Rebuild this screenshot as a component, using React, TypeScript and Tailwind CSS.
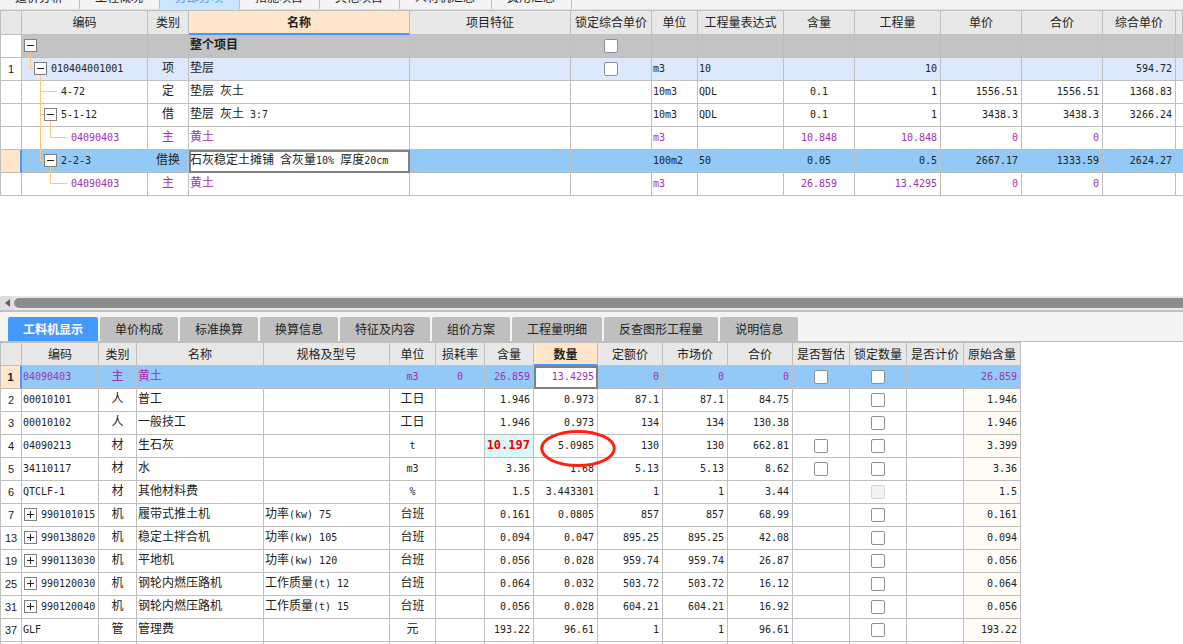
import { useState, type ReactNode } from 'react';
import clsx from 'clsx';

type Align = 'left' | 'center' | 'right';
type CheckState = 'off' | 'disabled' | undefined;

const navTabs = ['造价分析', '工程概况', '分部分项', '措施项目', '其他项目', '人材机汇总', '费用汇总'];

const detailTabs = [
  '工料机显示', '单价构成', '标准换算', '换算信息', '特征及内容',
  '组价方案', '工程量明细', '反查图形工程量', '说明信息'
];

const itemColumns = [
  { label: '', width: 'w-[22px]' },
  { label: '编码', width: 'w-[126px]' },
  { label: '类别', width: 'w-[41px]' },
  { label: '名称', width: 'w-[221px]', active: true },
  { label: '项目特征', width: 'w-[161px]' },
  { label: '锁定综合单价', width: 'w-[81px]' },
  { label: '单位', width: 'w-[46px]' },
  { label: '工程量表达式', width: 'w-[86px]' },
  { label: '含量', width: 'w-[71px]' },
  { label: '工程量', width: 'w-[86px]' },
  { label: '单价', width: 'w-[81px]' },
  { label: '合价', width: 'w-[81px]' },
  { label: '综合单价', width: 'w-[73px]' },
  { label: '', width: '' }
];

const resourceColumns = [
  { label: '', width: 'w-[22px]' },
  { label: '编码', width: 'w-[77px]' },
  { label: '类别', width: 'w-[38px]' },
  { label: '名称', width: 'w-[127px]' },
  { label: '规格及型号', width: 'w-[126px]' },
  { label: '单位', width: 'w-[46px]' },
  { label: '损耗率', width: 'w-[49px]' },
  { label: '含量', width: 'w-[49px]' },
  { label: '数量', width: 'w-[64px]', active: true },
  { label: '定额价', width: 'w-[65px]' },
  { label: '市场价', width: 'w-[65px]' },
  { label: '合价', width: 'w-[65px]' },
  { label: '是否暂估', width: 'w-[57px]' },
  { label: '锁定数量', width: 'w-[57px]' },
  { label: '是否计价', width: 'w-[57px]' },
  { label: '原始含量', width: 'w-[57px]' }
];

// lines: connector path in the code cell, node: indent of the expander box or of the text
const items = [
  { no: '', code: '', kind: '', name: '整个项目', lock: true, unit: '', expr: '', content: '', qty: '', price: '', total: '', unitPrice: '', lines: 'M8.5 17V23', node: 2, box: true, tone: 'root' },
  { no: '1', code: '010404001001', kind: '项', name: '垫层', lock: true, unit: 'm3', expr: '10', content: '', qty: '10', price: '', total: '', unitPrice: '594.72', lines: 'M8.5 0V10.5H12M18.5 17V23', node: 12, box: true, tone: 'section' },
  { no: '', code: '4-72', kind: '定', name: '垫层 灰土', unit: '10m3', expr: 'QDL', content: '0.1', qty: '1', price: '1556.51', total: '1556.51', unitPrice: '1368.83', lines: 'M18.5 0V23M18.5 10.5H35', node: 35, box: false, tone: 'plain' },
  { no: '', code: '5-1-12', kind: '借', name: '垫层 灰土 3:7', unit: '10m3', expr: 'QDL', content: '0.1', qty: '1', price: '3438.3', total: '3438.3', unitPrice: '3266.24', lines: 'M18.5 0V23M18.5 10.5H22M28.5 17V23', node: 22, box: true, tone: 'plain' },
  { no: '', code: '04090403', kind: '主', name: '黄土', unit: 'm3', expr: '', content: '10.848', qty: '10.848', price: '0', total: '0', unitPrice: '', lines: 'M18.5 0V23M28.5 0V10.5H45', node: 45, box: false, tone: 'main' },
  { no: '', code: '2-2-3', kind: '借换', name: '石灰稳定土摊铺 含灰量10% 厚度20cm', unit: '100m2', expr: '50', content: '0.05', qty: '0.5', price: '2667.17', total: '1333.59', unitPrice: '2624.27', lines: 'M18.5 0V10.5H22M28.5 17V23', node: 22, box: true, tone: 'selected' },
  { no: '', code: '04090403', kind: '主', name: '黄土', unit: 'm3', expr: '', content: '26.859', qty: '13.4295', price: '0', total: '0', unitPrice: '', lines: 'M28.5 0V10.5H45', node: 45, box: false, tone: 'main' }
];

interface Resource {
  no: string;
  code: string;
  kind: string;
  name: string;
  spec?: string;
  unit: string;
  loss?: string;
  content: string;
  qty: string;
  base: string;
  market: string;
  total: string;
  estimate?: CheckState;
  lock?: CheckState;
  origin: string;
  group?: boolean;
}

const resources: Resource[] = [
  { no: '1', code: '04090403', kind: '主', name: '黄土', unit: 'm3', loss: '0', content: '26.859', qty: '13.4295', base: '0', market: '0', total: '0', estimate: 'off', lock: 'off', origin: '26.859' },
  { no: '2', code: '00010101', kind: '人', name: '普工', unit: '工日', content: '1.946', qty: '0.973', base: '87.1', market: '87.1', total: '84.75', lock: 'off', origin: '1.946' },
  { no: '3', code: '00010102', kind: '人', name: '一般技工', unit: '工日', content: '1.946', qty: '0.973', base: '134', market: '134', total: '130.38', lock: 'off', origin: '1.946' },
  { no: '4', code: '04090213', kind: '材', name: '生石灰', unit: 't', content: '10.197', qty: '5.0985', base: '130', market: '130', total: '662.81', estimate: 'off', lock: 'off', origin: '3.399' },
  { no: '5', code: '34110117', kind: '材', name: '水', unit: 'm3', content: '3.36', qty: '1.68', base: '5.13', market: '5.13', total: '8.62', estimate: 'off', lock: 'off', origin: '3.36' },
  { no: '6', code: 'QTCLF-1', kind: '材', name: '其他材料费', unit: '%', content: '1.5', qty: '3.443301', base: '1', market: '1', total: '3.44', lock: 'disabled', origin: '1.5' },
  { no: '7', code: '990101015', kind: '机', name: '履带式推土机', spec: '功率(kw) 75', unit: '台班', content: '0.161', qty: '0.0805', base: '857', market: '857', total: '68.99', lock: 'off', origin: '0.161', group: true },
  { no: '13', code: '990138020', kind: '机', name: '稳定土拌合机', spec: '功率(kw) 105', unit: '台班', content: '0.094', qty: '0.047', base: '895.25', market: '895.25', total: '42.08', lock: 'off', origin: '0.094', group: true },
  { no: '19', code: '990113030', kind: '机', name: '平地机', spec: '功率(kw) 120', unit: '台班', content: '0.056', qty: '0.028', base: '959.74', market: '959.74', total: '26.87', lock: 'off', origin: '0.056', group: true },
  { no: '25', code: '990120030', kind: '机', name: '钢轮内燃压路机', spec: '工作质量(t) 12', unit: '台班', content: '0.064', qty: '0.032', base: '503.72', market: '503.72', total: '16.12', lock: 'off', origin: '0.064', group: true },
  { no: '31', code: '990120040', kind: '机', name: '钢轮内燃压路机', spec: '工作质量(t) 15', unit: '台班', content: '0.056', qty: '0.028', base: '604.21', market: '604.21', total: '16.92', lock: 'off', origin: '0.056', group: true },
  { no: '37', code: 'GLF', kind: '管', name: '管理费', unit: '元', content: '193.22', qty: '96.61', base: '1', market: '1', total: '96.61', lock: 'off', origin: '193.22' },
  { no: '', code: '', kind: '', name: '', unit: '', content: '', qty: '', base: '', market: '', total: '', origin: '' }
];

// Latin runs are set in a monospaced face, half the width of a Chinese character
const Mixed = ({ text, strong }: { text: string; strong?: boolean }) => (
  <>
    {text.split(/([\x20-\x7e]+)/).map((part, i) =>
      i % 2 === 1 ? (
        <span
          key={i}
          className={clsx("font-['DejaVu_Sans_Mono',monospace] whitespace-pre", strong ? 'text-[12px] font-bold' : 'text-[10px]')}
        >
          {part}
        </span>
      ) : (
        part
      )
    )}
  </>
);

interface CellProps {
  text?: string;
  align?: Align;
  strong?: boolean;
  className?: string;
  children?: ReactNode;
}

const Cell = ({ text = '', align = 'left', strong, className, children }: CellProps) => (
  <td
    className={clsx(
      'h-[23px] border-r border-b border-[#bfbfbf] py-0 align-top leading-[18px] whitespace-nowrap',
      align === 'left' && 'pr-0 pl-px',
      align === 'center' && 'px-0 text-center',
      align === 'right' && 'pr-[3px] pl-0 text-right',
      className
    )}
  >
    <Mixed text={text} strong={strong} />
    {children}
  </td>
);

const RowNumber = ({ text, selected }: { text: string; selected: boolean }) => (
  <td
    className={clsx(
      "h-[23px] border-b border-l border-[#bfbfbf] p-0 text-center align-middle font-['Liberation_Sans',sans-serif] text-[11px] leading-[22px] text-[#222]",
      selected ? 'border-r-2 border-r-[#4499ff] bg-[#ffe6ca] font-bold' : 'border-r bg-white'
    )}
  >
    {text}
  </td>
);

const CheckCell = ({ state, label }: { state: CheckState; label: string }) => (
  <td className="h-[23px] border-r border-b border-[#bfbfbf] p-0 align-middle">
    {state && (
      <input
        type="checkbox"
        aria-label={label}
        disabled={state === 'disabled'}
        className="mx-auto block size-[14px] appearance-none rounded-[2px] border border-[#8f8f8f] bg-white checked:bg-[#4499ff] disabled:border-[#d6d6d6] disabled:bg-[#f2f2f2]"
      />
    )}
  </td>
);

const Expander = ({ open, label }: { open: boolean; label: string }) => (
  <button type="button" aria-label={label} className="relative mt-1 block size-[13px] shrink-0 border border-[#808080] bg-white text-[#222]">
    <svg viewBox="0 0 11 11" className="block size-[11px]" stroke="currentColor" fill="none" aria-hidden="true">
      <path d={open ? 'M2 5.5H9' : 'M2 5.5H9M5.5 2V9'} />
    </svg>
  </button>
);

const HeaderRow = ({ columns, className }: { columns: { label: string; width: string; active?: boolean }[]; className: string }) => (
  <tr>
    {columns.map((column, i) => (
      <th
        key={i}
        scope="col"
        className={clsx(
          'border-t border-r border-[#bfbfbf] p-0 text-center align-top leading-[21px] whitespace-nowrap first:border-l',
          className,
          column.width,
          column.active ? 'border-b-2 border-b-[#4499ff] bg-[#ffe6ca] font-bold' : 'border-b bg-[#e8e8e8] font-normal'
        )}
      >
        {column.label}
      </th>
    ))}
  </tr>
);

const ItemTable = () => (
  <table className="w-full min-w-[1183px] table-fixed border-separate border-spacing-0">
    <thead>
      <HeaderRow columns={itemColumns} className="h-[25px]" />
    </thead>
    <tbody>
      {items.map((item, i) => {
        const selected = item.tone === 'selected';
        return (
          <tr
            key={i}
            className={clsx(
              item.tone === 'root' && 'bg-[#c3c3c3] font-bold',
              item.tone === 'section' && 'bg-[#dce9fd]',
              item.tone === 'main' && 'text-[#a32fb4]',
              selected && 'bg-[#92c9f7]'
            )}
          >
            <RowNumber text={item.no} selected={selected} />
            <td className="h-[23px] border-r border-b border-[#bfbfbf] p-0 align-top leading-[18px]">
              <div className="flex h-[22px] items-start">
                <svg width={item.node} height="22" className="shrink-0 overflow-visible" fill="none" stroke="#ffc67a" aria-hidden="true">
                  <path d={item.lines} />
                </svg>
                {item.box && <Expander open label={`折叠 ${item.code || item.name}`} />}
                <span className="pl-1"><Mixed text={item.code} /></span>
              </div>
            </td>
            <Cell text={item.kind} align="center" />
            <Cell text={item.name} className={selected ? 'bg-white outline-2 -outline-offset-2 outline-[#808080]' : ''} />
            <Cell />
            <CheckCell state={item.lock ? 'off' : undefined} label="锁定综合单价" />
            <Cell text={item.unit} />
            <Cell text={item.expr} />
            <Cell text={item.content} align="center" />
            <Cell text={item.qty} align="right" />
            <Cell text={item.price} align="right" />
            <Cell text={item.total} align="right" />
            <Cell text={item.unitPrice} align="right" />
            <Cell className="border-r-0" />
          </tr>
        );
      })}
    </tbody>
  </table>
);

const ResourceTable = () => (
  <table className="w-[1021px] table-fixed border-separate border-spacing-0">
    <thead>
      <HeaderRow columns={resourceColumns} className="h-[24px]" />
    </thead>
    <tbody>
      {resources.map((row, i) => {
        const selected = i === 0;
        const changed = row.no === '4';
        return (
          <tr key={i} className={clsx(selected && 'bg-[#92c9f7] text-[#a32fb4]')}>
            <RowNumber text={row.no} selected={selected} />
            <td className="h-[23px] border-r border-b border-[#bfbfbf] p-0 align-top leading-[18px]">
              {row.group ? (
                <div className="flex h-[22px] items-start gap-1 pl-[2px]">
                  <Expander open={false} label={`展开 ${row.code}`} />
                  <span><Mixed text={row.code} /></span>
                </div>
              ) : (
                <div className="pl-px"><Mixed text={row.code} /></div>
              )}
            </td>
            <Cell text={row.kind} align="center" />
            <Cell text={row.name} />
            <Cell text={row.spec} />
            <Cell text={row.unit} align="center" />
            <Cell text={row.loss} align="center" />
            <Cell text={row.content} align="right" strong={changed} className={changed ? 'bg-[#dbf8f8] text-[#f00000]' : ''} />
            <Cell
              text={row.qty}
              align="right"
              className={clsx(selected && 'bg-white outline-2 -outline-offset-2 outline-[#808080]', changed && 'relative')}
            >
              {changed && (
                <svg viewBox="0 0 76 37" className="absolute -top-[5px] left-[6px] z-10 h-[37px] w-[76px] max-w-none" aria-hidden="true">
                  <ellipse cx="38" cy="18.5" rx="36.3" ry="17" fill="none" stroke="#ff2212" strokeWidth="3" />
                </svg>
              )}
            </Cell>
            <Cell text={row.base} align="right" />
            <Cell text={row.market} align="right" />
            <Cell text={row.total} align="right" />
            <CheckCell state={row.estimate} label="是否暂估" />
            <CheckCell state={row.lock} label="锁定数量" />
            <Cell />
            <Cell text={row.origin} align="right" className={selected ? '' : 'bg-[#fffbf5]'} />
          </tr>
        );
      })}
    </tbody>
  </table>
);

export default function App() {
  const [navTab, setNavTab] = useState('分部分项');
  const [detailTab, setDetailTab] = useState('工料机显示');

  return (
    <div className="flex h-screen flex-col overflow-hidden bg-white font-['Noto_Sans_CJK_SC',sans-serif] text-[12px] text-[#222]">
      {/* Page tabs, scrolled mostly out of view */}
      <nav className="flex h-[10px] shrink-0 items-end overflow-hidden border-b border-[#dedede] bg-[#f4f4f4]">
        {navTabs.map((tab) => (
          <button
            key={tab}
            type="button"
            onClick={() => setNavTab(tab)}
            className={clsx(
              'h-6 shrink-0 border-r border-[#bfbfbf] pr-4 pl-[15px] leading-6',
              tab === navTab ? 'bg-[#cbe6ff] text-[#4499ff]' : 'bg-[#f4f4f4]'
            )}
          >
            {tab}
          </button>
        ))}
      </nav>

      <section className="h-[286px] shrink-0 overflow-hidden">
        <ItemTable />
      </section>

      {/* Horizontal scrollbar */}
      <div className="flex h-4 shrink-0 items-stretch border-b-2 border-[#bfbfbf] bg-[#e8e8e8]">
        <button type="button" aria-label="向左滚动" className="flex w-[14px] items-center justify-center bg-[#dedede]">
          <svg viewBox="0 0 5 8" className="h-2 w-[5px]" aria-hidden="true">
            <path d="M5 0V8L0 4Z" fill="#606060" />
          </svg>
        </button>
        <div className="my-[2px] flex-1 rounded-l-full bg-[#8b8b8b]" />
      </div>

      {/* Detail tabs */}
      <nav className="flex h-[30px] shrink-0 items-end gap-[2px] border-b border-[#bfbfbf] bg-[#f4f4f4] px-2">
        {detailTabs.map((tab) => (
          <button
            key={tab}
            type="button"
            onClick={() => setDetailTab(tab)}
            className={clsx(
              'h-6 shrink-0 rounded-t-[2px] px-[15px] leading-6',
              tab === detailTab ? 'bg-[#4499ff] font-bold text-white' : 'bg-[#bfbfbf]'
            )}
          >
            {tab}
          </button>
        ))}
      </nav>

      <section className="min-h-0 flex-1 overflow-hidden">
        <ResourceTable />
      </section>
    </div>
  );
}
